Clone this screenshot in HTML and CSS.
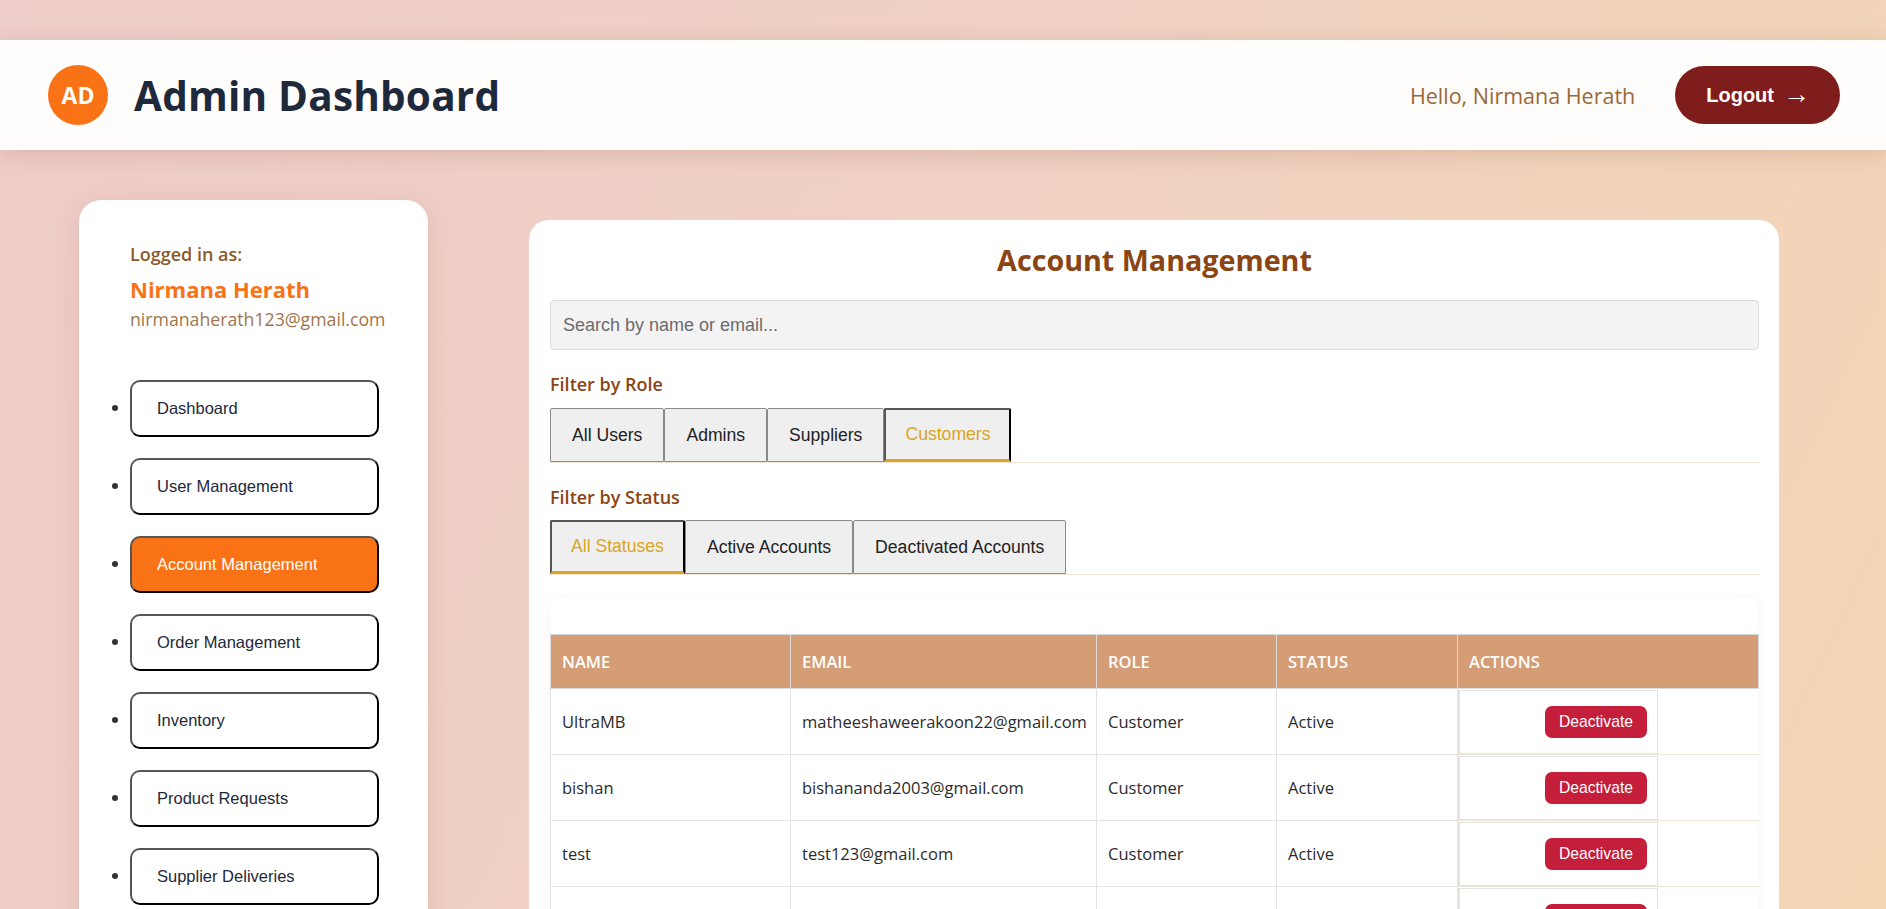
FILE: index.html
```html
<!DOCTYPE html>
<html lang="en">
<head>
<meta charset="utf-8">
<title>Admin Dashboard</title>
<link rel="stylesheet" href="styles.css">
</head>
<body>
<header class="topbar">
  <div class="brand">
    <div class="avatar">AD</div>
    <h1 class="brand-title">Admin Dashboard</h1>
  </div>
  <div class="user-area">
    <span class="hello">Hello, Nirmana Herath</span>
    <button class="logout">Logout <span class="arrow">→</span></button>
  </div>
</header>

<div class="layout">
  <aside class="sidebar">
    <div class="profile">
      <div class="logged-label">Logged in as:</div>
      <div class="profile-name">Nirmana Herath</div>
      <div class="profile-email">nirmanaherath123@gmail.com</div>
    </div>
    <ul class="nav">
      <li><button class="nav-btn">Dashboard</button></li>
      <li><button class="nav-btn">User Management</button></li>
      <li><button class="nav-btn active">Account Management</button></li>
      <li><button class="nav-btn">Order Management</button></li>
      <li><button class="nav-btn">Inventory</button></li>
      <li><button class="nav-btn">Product Requests</button></li>
      <li><button class="nav-btn">Supplier Deliveries</button></li>
    </ul>
  </aside>

  <main class="panel">
    <h2 class="panel-title">Account Management</h2>
    <input class="search" type="text" placeholder="Search by name or email...">

    <div class="filter-label">Filter by Role</div>
    <div class="tabs">
      <button class="tab">All Users</button>
      <button class="tab">Admins</button>
      <button class="tab">Suppliers</button>
      <button class="tab active">Customers</button>
    </div>

    <div class="filter-label">Filter by Status</div>
    <div class="tabs">
      <button class="tab active">All Statuses</button>
      <button class="tab">Active Accounts</button>
      <button class="tab">Deactivated Accounts</button>
    </div>

    <div class="table-card">
      <table class="accounts">
        <colgroup>
          <col class="c-name"><col class="c-email"><col class="c-role"><col class="c-status"><col class="c-actions">
        </colgroup>
        <thead>
          <tr><th>Name</th><th>Email</th><th>Role</th><th>Status</th><th>Actions</th></tr>
        </thead>
        <tbody>
          <tr><td>UltraMB</td><td>matheeshaweerakoon22@gmail.com</td><td>Customer</td><td>Active</td><td class="act"><div class="act-box"><button class="deact">Deactivate</button></div></td></tr>
          <tr><td>bishan</td><td>bishananda2003@gmail.com</td><td>Customer</td><td>Active</td><td class="act"><div class="act-box"><button class="deact">Deactivate</button></div></td></tr>
          <tr><td>test</td><td>test123@gmail.com</td><td>Customer</td><td>Active</td><td class="act"><div class="act-box"><button class="deact">Deactivate</button></div></td></tr>
          <tr><td>kasun</td><td>kasun99@gmail.com</td><td>Customer</td><td>Active</td><td class="act"><div class="act-box"><button class="deact">Deactivate</button></div></td></tr>
        </tbody>
      </table>
    </div>
  </main>
</div>
</body>
</html>
```

FILE: styles.css
```css
* { box-sizing: border-box; }

html, body { margin: 0; padding: 0; }

body {
  min-height: 100vh;
  font-family: "Open Sans", "Noto Sans", sans-serif;
  background: linear-gradient(115deg, #efcdca 0%, #f0d1c4 45%, #f3d6b4 100%);
  background-attachment: fixed;
  color: #333;
}

/* Header */
.topbar {
  margin-top: 40px;
  height: 110px;
  background: #fffcfc;
  box-shadow: 0 4px 22px rgba(120, 60, 40, 0.18);
  display: flex;
  align-items: center;
  justify-content: space-between;
  padding: 0 46px 0 48px;
  position: relative;
  z-index: 2;
}

.brand { display: flex; align-items: center; gap: 26px; }

.avatar {
  width: 60px;
  height: 60px;
  border-radius: 50%;
  background: #f97316;
  color: #fff;
  font-weight: 700;
  font-size: 23px;
  display: flex;
  align-items: center;
  justify-content: center;
}

.brand-title {
  margin: 0;
  font-size: 40.5px;
  font-weight: 700;
  color: #1e293b;
  letter-spacing: 0.2px;
}

.user-area { display: flex; align-items: center; gap: 40px; }

.hello {
  color: #9a6835;
  font-size: 21.5px;
}

.logout {
  height: 58px;
  padding: 0 30px 0 31px;
  border: none;
  border-radius: 29px;
  background: #7f1d1d;
  color: #fff;
  font-family: "Liberation Sans", Arial, sans-serif;
  font-weight: 700;
  font-size: 20px;
  display: flex;
  align-items: center;
  gap: 9px;
}
.logout .arrow { font-weight: 400; font-size: 27px; line-height: 1; margin-top: -2px; }

/* Layout */
.layout {
  display: flex;
  align-items: flex-start;
  padding: 50px 0 0 79px;
  gap: 101px;
}

/* Sidebar */
.sidebar {
  width: 349px;
  flex-shrink: 0;
  background: #fff;
  border-radius: 22px;
  box-shadow: 0 6px 30px rgba(150, 80, 60, 0.16);
  padding: 42px 0 20px 51px;
}

.logged-label {
  color: #8b5a2b;
  font-weight: 600;
  font-size: 18px;
  line-height: 24px;
}

.profile-name {
  margin-top: 9px;
  color: #f97316;
  font-weight: 700;
  font-size: 22px;
  line-height: 28px;
}

.profile-email {
  margin-top: 3px;
  color: #a0754a;
  font-size: 17.7px;
  line-height: 26px;
}

.nav {
  list-style: disc;
  margin: 48px 0 0 0;
  padding: 0;
}

.nav li {
  margin-bottom: 21px;
}

.nav-btn {
  width: 249px;
  height: 57px;
  text-align: left;
  padding: 0 0 0 25px;
  background: #fff;
  border: 2px solid;
  border-color: #555 #000 #000 #555;
  border-radius: 10px;
  font-family: "Liberation Sans", Arial, sans-serif;
  font-size: 16.5px;
  color: #1e293b;
  vertical-align: middle;
}

.nav-btn.active {
  background: #f97316;
  color: #fff;
}

/* Main panel */
.panel {
  margin-top: 20px;
  width: 1250px;
  background: #fff;
  border-radius: 20px;
  padding: 20px 20px 40px 21px;
}

.panel-title {
  margin: 0 0 20px;
  text-align: center;
  font-size: 28.7px;
  font-weight: 700;
  color: #8b4513;
  line-height: 40px;
}

.search {
  display: block;
  width: 100%;
  height: 50px;
  padding: 0 12px;
  background: #f3f3f3;
  border: 1px solid #dcdcdc;
  border-radius: 4px;
  font-family: "Liberation Sans", Arial, sans-serif;
  font-size: 18px;
  color: #333;
}
.search::placeholder { color: #6b6b6b; }

.filter-label {
  margin: 22px 0 12px;
  color: #8b4513;
  font-weight: 600;
  font-size: 18px;
  line-height: 24px;
}

.tabs + .filter-label { margin-top: 22px; margin-bottom: 11px; }

.tabs {
  display: flex;
  border-bottom: 1px solid #f1e6d6;
}

.tab {
  height: 54px;
  padding: 0 21px;
  background: #efefef;
  border: 1px solid #8a8a8a;
  border-radius: 2px 2px 0 0;
  font-family: "Liberation Sans", Arial, sans-serif;
  font-size: 17.6px;
  color: #222;
}

.tab.active {
  color: #daa520;
  border: 2px solid;
  border-color: #555 #000 #daa520 #555;
  border-bottom-width: 3px;
  padding: 0 19px;
}

/* Table */
.table-card {
  margin-top: 22px;
  background: #fff;
  border-radius: 12px;
  box-shadow: 0 2px 12px rgba(160, 110, 80, 0.08);
  padding-top: 37px;
  overflow: hidden;
}

.accounts {
  width: 100%;
  border-collapse: collapse;
  table-layout: fixed;
  font-size: 16.5px;
}

.c-name { width: 240px; }
.c-email { width: 306px; }
.c-role { width: 180px; }
.c-status { width: 181px; }

.accounts th {
  height: 54px;
  background: #d59d76;
  color: #fff;
  text-align: left;
  text-transform: uppercase;
  font-weight: 600;
  font-size: 16.5px;
  padding: 0 11px;
  border: 1px solid #dcdcdc;
  border-top: 1px solid #d6d6d6;
}

.accounts td {
  height: 66px;
  padding: 0 11px;
  color: #2b2b2b;
  border: 1px solid #e3e3e3;
  white-space: nowrap;
}

.accounts tr { border-bottom: 1px solid #efe6d6; }

.accounts td.act {
  padding: 0;
  border-right: none;
  border-bottom: none;
  border-top: none;
}

.act-box {
  width: 200px;
  height: 64px;
  border: 1px solid #e3e3e3;
  border-left-width: 2px;
  display: flex;
  align-items: center;
  justify-content: flex-end;
  padding-right: 10px;
}

.deact {
  height: 32px;
  padding: 0 14px;
  background: #c41e3a;
  color: #fff;
  border: none;
  border-radius: 7px;
  font-family: "Liberation Sans", Arial, sans-serif;
  font-size: 15.7px;
}
```
